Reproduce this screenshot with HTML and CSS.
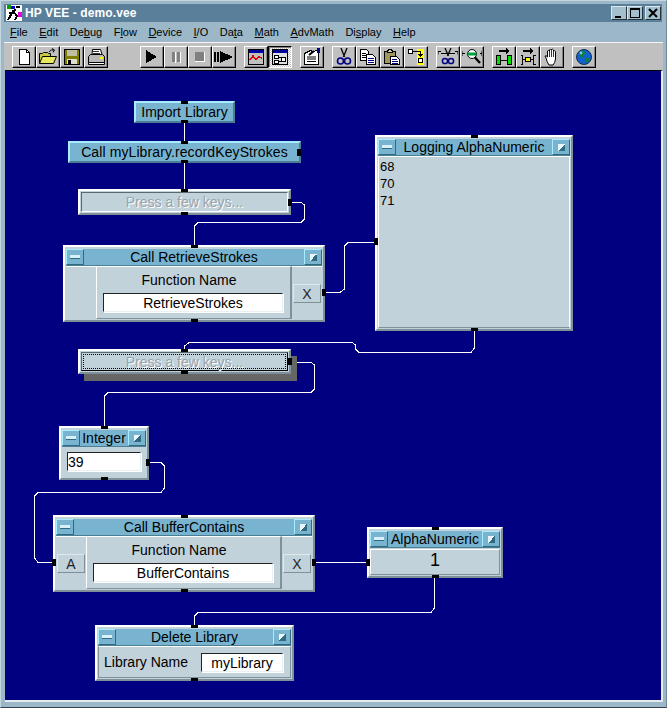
FILE: index.html
```html
<!DOCTYPE html>
<html lang="en">
<head>
    <meta charset="UTF-8">
    <title>HP VEE - demo.vee</title>
    <link rel="stylesheet" href="styles.css">
</head>
<body>
<div class="window">
    <div class="titlebar">
        <svg class="appicon" viewBox="0 0 16 16" shape-rendering="crispEdges">
            <rect width="16" height="16" fill="#fff"/>
            <rect x="1" y="0" width="4" height="4" fill="#00a000"/>
            <rect x="5" y="1" width="4" height="3" fill="#0000d0"/>
            <rect x="12" y="7" width="4" height="5" fill="#e000e0"/>
            <path d="M2 15 L7 6 L10 5 M7 6 L11 11 L9 15 M3 8 L8 8" fill="none" stroke="#000" stroke-width="2"/>
            <rect x="10" y="1" width="4" height="2" fill="#000"/>
        </svg>
        <span class="apptitle">HP VEE - demo.vee</span>
        <div class="winbtns">
            <div class="winbtn"><svg viewBox="0 0 14 12" shape-rendering="crispEdges"><rect x="3" y="9" width="6" height="2"/></svg></div>
            <div class="winbtn"><svg viewBox="0 0 14 12" shape-rendering="crispEdges"><path d="M2 1h10v10H2z M3 3v7h8V3z" fill-rule="evenodd"/></svg></div>
            <div class="winbtn"><svg viewBox="0 0 14 12"><path d="M3 2 L11 10 M11 2 L3 10" stroke="#000" stroke-width="2"/></svg></div>
        </div>
    </div>

    <div class="menubar">
        <span><u>F</u>ile</span>
        <span><u>E</u>dit</span>
        <span>De<u>b</u>ug</span>
        <span>F<u>l</u>ow</span>
        <span><u>D</u>evice</span>
        <span><u>I</u>/O</span>
        <span>Da<u>t</u>a</span>
        <span><u>M</u>ath</span>
        <span><u>A</u>dvMath</span>
        <span>Di<u>s</u>play</span>
        <span><u>H</u>elp</span>
    </div>

    <div class="toolbar">
        <div class="group">
            <div class="tool"><svg viewBox="0 0 20 18" shape-rendering="crispEdges"><path d="M5.5 1.5h7l3 3v12h-10z" fill="#fff" stroke="#000"/><path d="M12.5 1.5v3h3" fill="none" stroke="#000"/></svg></div>
            <div class="tool"><svg viewBox="0 0 20 18"><path d="M1.5 15.5v-10h3l1-1h4l1 1h2v3" fill="#c8c840" stroke="#000"/><path d="M1.5 15.5l3-7h14l-3 7z" fill="#e8e860" stroke="#000"/><path d="M11 4 Q13 1 16 2 M14 0.5l2.5 1.5-1.5 2.5" fill="none" stroke="#000"/></svg></div>
            <div class="tool"><svg viewBox="0 0 20 18" shape-rendering="crispEdges"><path d="M2.5 1.5h15v15h-15z" fill="#808000" stroke="#000"/><rect x="5" y="2" width="10" height="6" fill="#c0c0a0"/><rect x="5" y="11" width="10" height="5" fill="#e0e0d0"/><rect x="6" y="12" width="3" height="4" fill="#000"/></svg></div>
            <div class="tool"><svg viewBox="0 0 20 18"><path d="M6.5 1.5h8l1.5 5h-10z" fill="#fff" stroke="#000"/><path d="M7 3.5h6M7 5.5h7" stroke="#000" stroke-width="0.8"/><path d="M2.5 8.5l2-2h12l2 2v6h-16z" fill="#b8b8b8" stroke="#000"/><path d="M2.5 14.5h16v2h-16z" fill="#fff" stroke="#000"/><rect x="14" y="9" width="3" height="2" fill="#ff0"/></svg></div>
        </div>
        <div class="group gap-wide">
            <div class="tool"><svg viewBox="0 0 20 18" shape-rendering="crispEdges"><path d="M4 2 L15 9 L4 15z"/></svg></div>
            <div class="tool"><svg viewBox="0 0 20 18" shape-rendering="crispEdges"><rect x="6" y="4" width="3" height="10" fill="#808080"/><rect x="11" y="4" width="3" height="10" fill="#808080"/><rect x="9" y="4" width="1" height="11" fill="#fff"/><rect x="14" y="4" width="1" height="11" fill="#fff"/></svg></div>
            <div class="tool"><svg viewBox="0 0 20 18" shape-rendering="crispEdges"><rect x="5" y="4" width="9" height="9" fill="#808080"/><rect x="5" y="13" width="10" height="1" fill="#fff"/><rect x="14" y="4" width="1" height="10" fill="#fff"/></svg></div>
            <div class="tool"><svg viewBox="0 0 20 18" shape-rendering="crispEdges"><rect x="0" y="4" width="2" height="10"/><rect x="3" y="4" width="2" height="10"/><path d="M6 3 L19 9 L6 15z"/></svg></div>
        </div>
        <div class="group">
            <div class="tool"><svg viewBox="0 0 20 18" shape-rendering="crispEdges"><rect x="2.5" y="1.5" width="15" height="15" fill="#c0c0c0" stroke="#000"/><rect x="3" y="2" width="14" height="3" fill="#0000a0"/><path d="M4 12 L7 8 L10 12 L13 9 L16 10" fill="none" stroke="#e00000" stroke-width="1.4"/></svg></div>
            <div class="tool active"><svg viewBox="0 0 20 18" shape-rendering="crispEdges"><rect x="2.5" y="1.5" width="15" height="15" fill="#e0e0e0" stroke="#000"/><rect x="3" y="2" width="14" height="3" fill="#0000a0"/><rect x="4.5" y="7.5" width="4" height="3" fill="#fff" stroke="#000"/><rect x="4.5" y="12.5" width="4" height="3" fill="#fff" stroke="#000"/><rect x="11.5" y="9.5" width="4" height="4" fill="#fff" stroke="#000"/><path d="M8 9.5h3.5M8 13.5h3.5" stroke="#000"/></svg></div>
        </div>
        <div class="group">
            <div class="tool"><svg viewBox="0 0 20 18"><path d="M2.5 5.5l6-3 2 1 6-1v14h-14z" fill="#fff" stroke="#000" shape-rendering="crispEdges"/><path d="M5 9h9M5 11h9M5 13.5h9" stroke="#000"/><path d="M7 7 L12 3" stroke="#000" stroke-width="2"/><rect x="15" y="0" width="3" height="5" fill="#000080"/></svg></div>
        </div>
        <div class="group">
            <div class="tool"><svg viewBox="0 0 20 18"><path d="M7 0 L10.5 9 M13 0 L9.5 9" stroke="#000" stroke-width="1.3" fill="none"/><circle cx="6.5" cy="13" r="3" fill="none" stroke="#000080" stroke-width="1.6"/><circle cx="13.5" cy="13" r="3" fill="none" stroke="#000080" stroke-width="1.6"/><path d="M9 10 L7.5 11 M11 10 L12.5 11" stroke="#000080"/></svg></div>
            <div class="tool"><svg viewBox="0 0 20 18" shape-rendering="crispEdges"><path d="M2.5 1.5h6l2 2v9h-8z" fill="#fff" stroke="#000"/><path d="M4 5h4M4 7h4M4 9h4" stroke="#000"/><path d="M8.5 6.5h6l3 3v7h-9z" fill="#fff" stroke="#000"/><path d="M10 10h6M10 12h6M10 14h6" stroke="#000080"/></svg></div>
            <div class="tool"><svg viewBox="0 0 20 18" shape-rendering="crispEdges"><path d="M2.5 3.5h11v12h-11z" fill="#a09860" stroke="#000"/><path d="M5.5 3.5l1-2h3l1 2v1h-5z" fill="#d0d0a0" stroke="#000"/><path d="M8.5 8.5h6l3 3v5h-9z" fill="#fff" stroke="#000"/><path d="M10 11h5M10 13h6M10 15h6" stroke="#000080"/></svg></div>
            <div class="tool"><svg viewBox="0 0 20 18" shape-rendering="crispEdges"><rect x="2.5" y="1.5" width="4" height="4" fill="#fff" stroke="#000"/><rect x="11" y="1" width="7" height="16" fill="#ff0"/><path d="M6.5 3.5h8v4" fill="none" stroke="#000"/><path d="M12 6h5l-2.5 3z"/><rect x="12.5" y="10.5" width="4" height="4" fill="#fff" stroke="#000"/></svg></div>
        </div>
        <div class="group">
            <div class="tool"><svg viewBox="0 0 20 18"><path d="M7 0 L10.5 8 M13 0 L9.5 8" stroke="#000" stroke-width="1.3" fill="none"/><path d="M0 3.5h3M0 3.5v3M3 5.5h14M20 3.5h-3M20 3.5v3" stroke="#000"/><circle cx="7" cy="13" r="2.6" fill="none" stroke="#000080" stroke-width="1.5"/><circle cx="13" cy="13" r="2.6" fill="none" stroke="#000080" stroke-width="1.5"/></svg></div>
            <div class="tool"><svg viewBox="0 0 20 18"><path d="M0 3v5M0 5.5h3M18 5.5h2M20 3v5" stroke="#000"/><circle cx="10" cy="6" r="4.5" fill="#fff" stroke="#000"/><rect x="5.5" y="4.5" width="9" height="3" fill="#00a040"/><path d="M13 9.5 L18 15" stroke="#000" stroke-width="2.4"/></svg></div>
        </div>
        <div class="group">
            <div class="tool"><svg viewBox="0 0 20 18" shape-rendering="crispEdges"><rect x="2.5" y="7.5" width="4" height="9" fill="#00e000" stroke="#000"/><rect x="13.5" y="7.5" width="4" height="9" fill="#00e000" stroke="#000"/><path d="M6 12h8" stroke="#000"/><path d="M5 3h8" stroke="#000" stroke-width="2"/><path d="M12 0l4 3-4 3z"/></svg></div>
            <div class="tool"><svg viewBox="0 0 20 18" shape-rendering="crispEdges"><path d="M2.5 7.5h2v9h-2M17.5 7.5h-2v9h2" fill="none" stroke="#000"/><rect x="7.5" y="9.5" width="5" height="4" fill="#ff0" stroke="#000"/><path d="M4 11.5h3M13 11.5h3" stroke="#000"/><path d="M5 3h8" stroke="#000" stroke-width="2"/><path d="M12 0l4 3-4 3z"/></svg></div>
            <div class="tool"><svg viewBox="0 0 20 18"><path d="M4 10 L3 8 Q4 7 5.5 9 L5.5 3 Q6.5 2 7.5 3 L7.5 2 Q8.5 0 9.5 2 L9.5 1.5 Q10.5 0.5 11.5 2 L11.5 3 Q12.5 2 13.5 3.5 L13.5 11 Q13 15 11 17 L7 17 Q5 14 4 10z" fill="#fff" stroke="#000"/><path d="M7.5 3v6M9.5 2v7M11.5 3v6" stroke="#000" stroke-width="0.8"/></svg></div>
        </div>
        <div class="group">
            <div class="tool"><svg viewBox="0 0 20 18"><circle cx="10" cy="9" r="7.5" fill="#1060d0" stroke="#103050"/><path d="M6 3 Q10 2 12 5 Q9 7 10 10 Q6 10 5 7z M12 10 Q16 9 16 12 Q14 15 12 14z" fill="#108040"/><circle cx="7" cy="5" r="1.4" fill="#80c0ff"/></svg></div>
        </div>
    </div>

    <div class="canvas">
        <svg class="wires" viewBox="5 70 657 632" shape-rendering="crispEdges">
            <polyline points="184.5,123 184.5,141"/>
            <polyline points="184.5,163 184.5,189"/>
            <polyline points="291,202.5 301,202.5 304.5,205 304.5,219 301,222.5 198,222.5 194.5,226 194.5,245"/>
            <polyline points="325,292.5 340,292.5 344.5,289 344.5,246 348,242.5 375,242.5"/>
            <polyline points="474.5,331 474.5,348 471,352.5 359,352.5 355.5,349 355.5,345 352,342.5 189,342.5 184.5,346 184.5,349"/>
            <polyline points="291,362.5 311,362.5 314.5,365 314.5,389 311,392.5 108,392.5 104.5,396 104.5,426"/>
            <polyline points="149,462.5 161,462.5 164.5,466 164.5,488 161,492.5 38,492.5 34.5,496 34.5,558 38,562.5 53,562.5"/>
            <polyline points="315,562.5 367,562.5"/>
            <polyline points="434.5,578 434.5,608 431,612.5 198,612.5 194.5,616 194.5,625"/>
        </svg>

        <div class="bar-node n-import">
            <i class="pin pin-top"></i>Import Library<i class="pin pin-bottom"></i>
        </div>

        <div class="bar-node n-recordkeys">
            <i class="pin pin-top"></i>Call myLibrary.recordKeyStrokes<i class="pin pin-bottom"></i><i class="pin pin-right"></i>
        </div>

        <div class="press n-press1">
            <i class="pin pin-top"></i><i class="pin pin-bottom"></i><i class="pin pin-right"></i>
            <div class="press-face">Press a few keys...</div>
        </div>

        <div class="node n-retrieve">
            <i class="pin pin-top"></i><i class="pin pin-bottom"></i><i class="pin pin-right"></i>
            <div class="title"><div class="tbtn"><b class="minus"></b></div><span>Call RetrieveStrokes</span><div class="tbtn"><b class="square"></b></div></div>
            <div class="callbody">
                <div class="termcol"></div>
                <div class="fnpanel">
                    <div class="fnlabel">Function Name</div>
                    <div class="field">RetrieveStrokes</div>
                </div>
                <div class="termcol"><div class="term">X</div></div>
            </div>
        </div>

        <div class="node n-logging">
            <i class="pin pin-top"></i><i class="pin pin-bottom"></i><i class="pin pin-left"></i>
            <div class="title"><div class="tbtn"><b class="minus"></b></div><span>Logging AlphaNumeric</span><div class="tbtn"><b class="square"></b></div></div>
            <div class="logbody">
                <div>68</div>
                <div>70</div>
                <div>71</div>
            </div>
        </div>

        <div class="press focused n-press2">
            <i class="pin pin-top"></i><i class="pin pin-bottom"></i><i class="pin pin-right"></i>
            <div class="press-face">Press a few keys...</div>
        </div>

        <div class="node n-integer">
            <i class="pin pin-top"></i><i class="pin pin-bottom"></i><i class="pin pin-right"></i>
            <div class="title"><div class="tbtn"><b class="minus"></b></div><span>Integer</span><div class="tbtn"><b class="square"></b></div></div>
            <div class="intbody"><div class="field left">39</div></div>
        </div>

        <div class="node n-buffer">
            <i class="pin pin-top"></i><i class="pin pin-bottom"></i><i class="pin pin-left"></i><i class="pin pin-right"></i>
            <div class="title"><div class="tbtn"><b class="minus"></b></div><span>Call BufferContains</span><div class="tbtn"><b class="square"></b></div></div>
            <div class="callbody">
                <div class="termcol"><div class="term">A</div></div>
                <div class="fnpanel">
                    <div class="fnlabel">Function Name</div>
                    <div class="field">BufferContains</div>
                </div>
                <div class="termcol"><div class="term">X</div></div>
            </div>
        </div>

        <div class="node n-alpha">
            <i class="pin pin-top"></i><i class="pin pin-bottom"></i><i class="pin pin-left"></i>
            <div class="title"><div class="tbtn"><b class="minus"></b></div><span>AlphaNumeric</span><div class="tbtn"><b class="square"></b></div></div>
            <div class="alphabody">1</div>
        </div>

        <div class="node n-delete">
            <i class="pin pin-top"></i><i class="pin pin-bottom"></i>
            <div class="title"><div class="tbtn"><b class="minus"></b></div><span>Delete Library</span><div class="tbtn"><b class="square"></b></div></div>
            <div class="delbody">
                <span>Library Name</span>
                <div class="field">myLibrary</div>
            </div>
        </div>
    </div>
</div>
</body>
</html>
```

FILE: styles.css
```css
* {
    box-sizing: border-box;
    margin: 0;
    padding: 0;
}

body {
    font-family: "Liberation Sans", Arial, sans-serif;
    font-size: 14px;
    color: #000;
    background: #9cb8c8;
}

/* window chrome */
.window {
    width: 667px;
    height: 708px;
    display: flex;
    flex-direction: column;
    padding: 4px 4px 2px 4px;
    background: #9cb8c8;
    border-top: 1px solid #c4d6e0;
    border-left: 1px solid #c4d6e0;
    border-right: 1px solid #6f8796;
    border-bottom: 1px solid #33424c;
}

.titlebar {
    height: 18px;
    margin-top: -1px;
    margin-left: -1px;
    display: flex;
    align-items: center;
    background: #5a7f9b;
    flex: none;
}

.appicon {
    width: 16px;
    height: 16px;
    margin-left: 2px;
}

.apptitle {
    margin-left: 3px;
    font-weight: bold;
    font-size: 12px;
    letter-spacing: 0.1px;
    color: #fff;
}

.winbtns {
    margin-left: auto;
    margin-right: 1px;
    display: flex;
}

.winbtn {
    width: 16px;
    height: 14px;
    background: #a4bfce;
    border: 1px solid;
    border-color: #dbe8ef #26333c #26333c #dbe8ef;
    display: flex;
}

.winbtn svg {
    width: 14px;
    height: 12px;
}

.winbtn:last-child {
    margin-left: 2px;
}

.menubar {
    height: 20px;
    margin-left: -1px;
    flex: none;
    display: flex;
    align-items: center;
    padding-left: 6px;
    gap: 11.5px;
    font-size: 11px;
    color: #000;
}

.toolbar {
    height: 28px;
    margin-left: -1px;
    margin-right: -1px;
    flex: none;
    display: flex;
    gap: 8px;
    padding: 3px 0 0 8px;
    background: #c0c0c0;
    border-top: 1px solid #f4f4f4;
}

.group {
    display: flex;
}

.gap-wide {
    margin-left: 24px;
}

.tool {
    width: 24px;
    height: 22px;
    background: #c0c0c0;
    border: 1px solid;
    border-color: #fff #000 #000 #fff;
    box-shadow: inset -1px -1px 0 #808080;
    display: flex;
    align-items: center;
    justify-content: center;
}

.tool svg {
    width: 20px;
    height: 18px;
}

.tool.active {
    border-color: #000 #fff #fff #000;
    box-shadow: inset 1px 1px 0 #808080;
    background: repeating-conic-gradient(#fff 0 25%, #c0c0c0 0 50%) 0 0 / 2px 2px;
}

/* work area */
.canvas {
    position: relative;
    flex: 1;
    background: #000080;
    border-top: 1px solid #000;
    margin-left: 0;
    border-bottom: 2px solid #e4ecf0;
    border-right: 2px solid #e4ecf0;
    margin-bottom: 3px;
    margin-right: -1px;
    overflow: hidden;
}

.wires {
    position: absolute;
    left: 0;
    top: -1px;
    width: 657px;
    height: 632px;
}

.wires polyline {
    fill: none;
    stroke: #fff;
    stroke-width: 1;
}

/* diagram node places, canvas coords */
.n-import     { left: 129px; top: 30px;  width: 101px; height: 22px; }
.n-recordkeys { left: 63px;  top: 70px;  width: 233px; height: 22px; letter-spacing: 0.1px; }
.n-press1     { left: 73px;  top: 118px; width: 213px; height: 26px; }
.n-retrieve   { left: 58px;  top: 174px; width: 262px; height: 77px; }
.n-logging    { left: 370px; top: 64px;  width: 198px; height: 196px; }
.n-press2     { left: 73px;  top: 278px; width: 213px; height: 25px; }
.n-integer    { left: 54px;  top: 355px; width: 90px;  height: 54px; }
.n-buffer     { left: 48px;  top: 444px; width: 262px; height: 77px; }
.n-alpha      { left: 362px; top: 456px; width: 136px; height: 51px; }
.n-delete     { left: 90px;  top: 554px; width: 199px; height: 56px; }

.n-retrieve .pin-right { top: 42px; }
.n-logging .pin-left   { top: 101px; }
.n-integer .pin-right  { top: 31px; }
.n-buffer .pin-left,
.n-buffer .pin-right   { top: 42px; }
.n-alpha .pin-left     { top: 30px; }

.pin {
    position: absolute;
    background: #000;
    z-index: 2;
}

.pin-top,
.pin-bottom {
    width: 7px;
    height: 3px;
    left: calc(50% - 3.5px);
}

.pin-top { top: -2px; }
.pin-bottom { bottom: -2px; }

.pin-left,
.pin-right {
    width: 4px;
    height: 7px;
    top: calc(50% - 3.5px);
}

.pin-left { left: -3px; }
.pin-right { right: -3px; }

.bar-node {
    position: absolute;
    display: flex;
    align-items: center;
    justify-content: center;
    background: #78b4d0;
    border: 2px solid;
    border-color: #a8ecff #4a7f95 #4a7f95 #a8ecff;
}

.bar-node .pin-right { right: -2px; top: 6px; }

.press {
    position: absolute;
    background: #c2d2da;
    border: 2px solid;
    border-color: #fff #7f9099 #7f9099 #fff;
    padding: 1px;
    display: flex;
}

.press-face {
    flex: 1;
    display: flex;
    align-items: center;
    justify-content: center;
    border: 1px solid;
    border-color: #5b6870 #fff #fff #5b6870;
    color: #98a4ac;
    text-shadow: 1px 1px 0 #fff;
}

.press.focused {
    box-shadow: 6px 7px 0 #666;
}

.press.focused .press-face {
    border-color: #5b6870 #000 #000 #5b6870;
    outline: 1px dotted #000;
    outline-offset: -3px;
}

.node {
    position: absolute;
    display: flex;
    flex-direction: column;
    background: #c2d2da;
    border: 2px solid;
    border-color: #fff #7f9099 #7f9099 #fff;
    padding: 2px 1px 1px 1px;
}

.title {
    height: 17px;
    flex: none;
    display: flex;
    align-items: stretch;
    background: #78b4d0;
    border-bottom: 1px solid #4a7f95;
}

.title span {
    flex: 1;
    min-width: 0;
    text-align: center;
    line-height: 16px;
    white-space: nowrap;
}

.tbtn {
    width: 18px;
    flex: none;
    display: flex;
    align-items: center;
    justify-content: center;
    border: 1px solid;
    border-color: #a8ecff #2f6a80 #2f6a80 #a8ecff;
}

.minus {
    width: 10px;
    height: 4px;
    background: #d8f0f8;
    border-bottom: 1px solid #2f6a80;
}

.square {
    width: 7px;
    height: 7px;
    background: linear-gradient(135deg, #e8f6fa 50%, #2f6a80 50%);
}

.callbody {
    flex: 1;
    display: flex;
}

.termcol {
    width: 30px;
    flex: none;
    display: flex;
    align-items: center;
    justify-content: center;
    border-top: 1px solid #fff;
}

.term {
    width: 28px;
    height: 19px;
    line-height: 18px;
    text-align: center;
    font-size: 14px;
    color: #222;
    border: 1px solid;
    border-color: #dfe8ec #7f9099 #7f9099 #dfe8ec;
}

.fnpanel {
    flex: 1;
    padding: 7px 7px 0 6px;
    border-left: 1px solid #fff;
    border-top: 1px solid #fff;
    border-right: 2px solid #7f9099;
    border-bottom: 1px solid #7f9099;
}

.fnlabel {
    text-align: center;
    line-height: 13px;
    margin-bottom: 6px;
    padding-right: 8px;
}

.field {
    background: #fff;
    height: 19px;
    line-height: 19px;
    text-align: center;
    border: 1px solid;
    border-color: #222 #e8f0f4 #e8f0f4 #222;
    box-shadow: 1px 1px 0 #fff;
}

.field.left {
    text-align: left;
}

.logbody {
    flex: 1;
    padding: 1px 0 0 1px;
    border-left: 1px solid #fff;
    border-top: 1px solid #fff;
    border-right: 1px solid #fff;
    border-bottom: 1px solid #7f9099;
    line-height: 17px;
    font-size: 13px;
}

.intbody {
    flex: 1;
    padding: 5px 5px 0 5px;
}

.alphabody {
    flex: 1;
    text-align: center;
    font-size: 18px;
    line-height: 21px;
    margin-top: 1px;
    border: 1px solid;
    border-color: #fff #7f9099 #7f9099 #fff;
}

.delbody {
    flex: 1;
    display: flex;
    align-items: center;
    justify-content: space-between;
    padding: 0 7px 0 5px;
    border-top: 1px solid #fff;
    border-left: 1px solid #7f9099;
    border-bottom: 1px solid #7f9099;
    border-right: 1px solid #7f9099;
}

.delbody .field {
    width: 82px;
}
```
